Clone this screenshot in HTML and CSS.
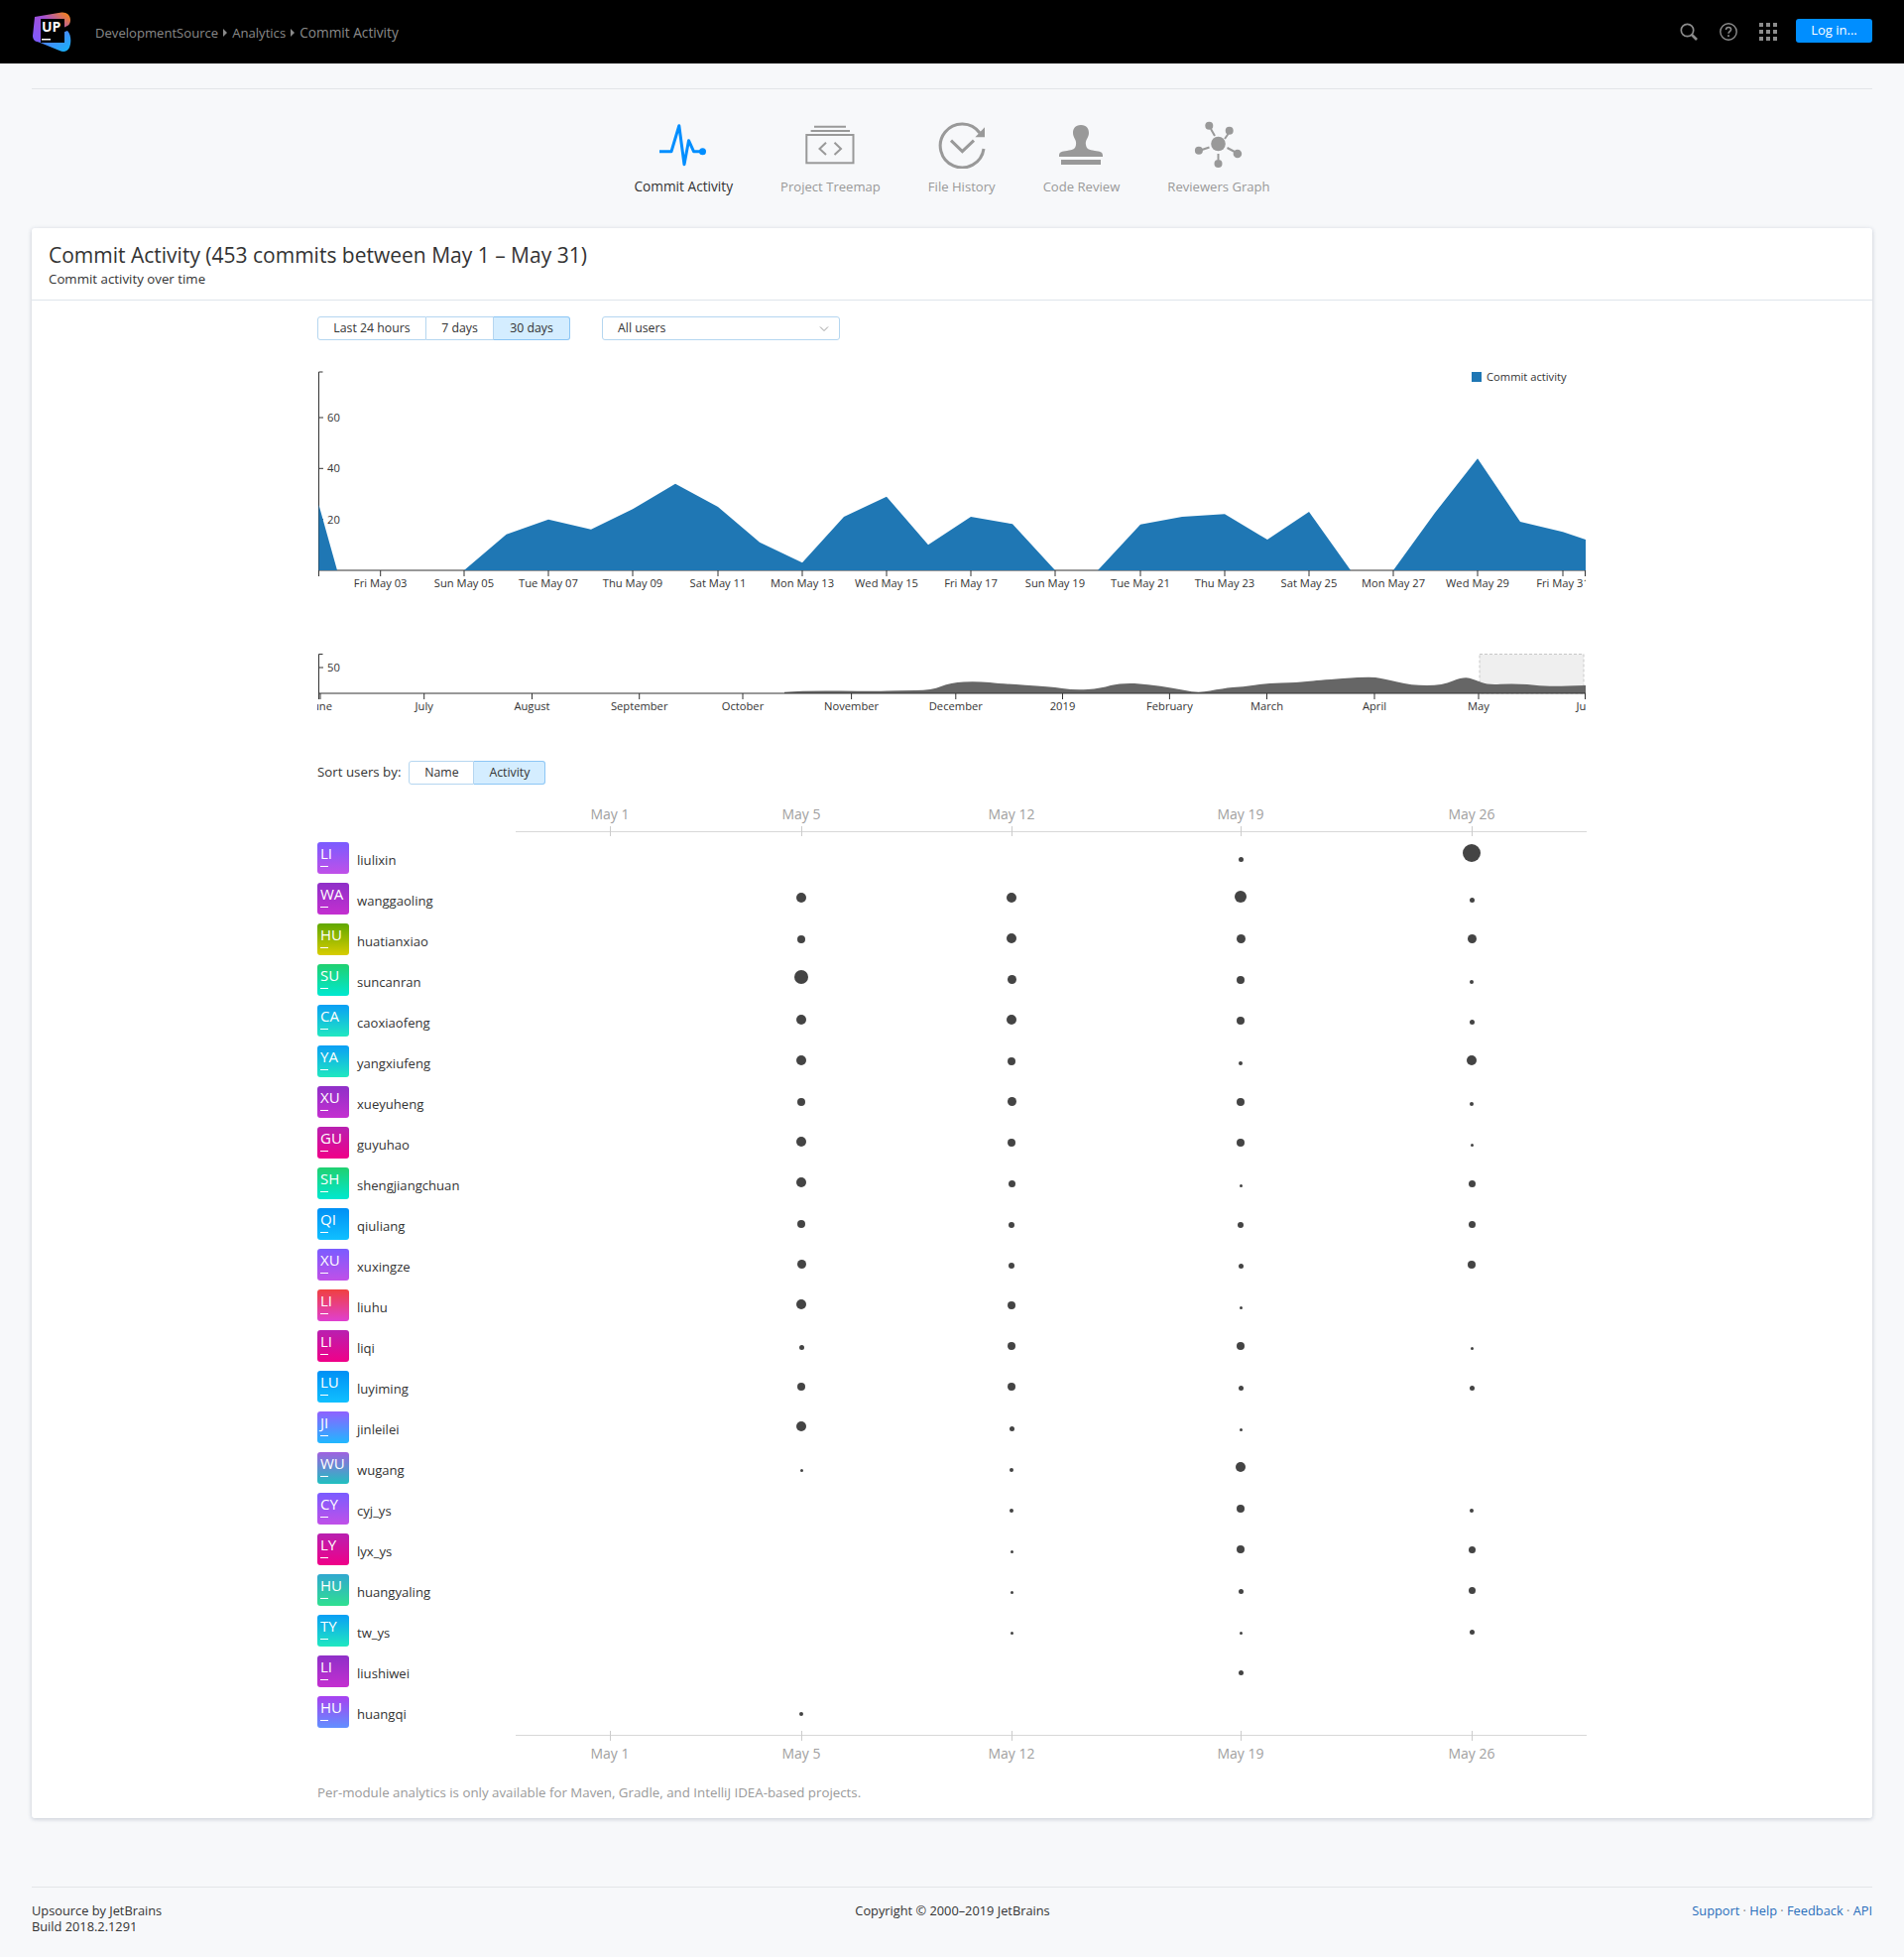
FILE: index.html
```html
<!DOCTYPE html>
<html lang="en">

<head>
    <meta charset="UTF-8">
    <meta name="viewport" content="width=device-width, initial-scale=1.0">
    <title>Commit Activity</title>
    <link rel="stylesheet" href="styles.css">
</head>

<body>
    <header class="topbar">
        <svg class="logo" width="40" height="40" viewBox="0 0 40 40">
            <defs>
                <linearGradient id="logo-top" x1="0" y1="1" x2="1" y2="0">
                    <stop offset="0" stop-color="#7b5cff" />
                    <stop offset="0.55" stop-color="#a24fd8" />
                    <stop offset="1" stop-color="#ff8a00" />
                </linearGradient>
                <linearGradient id="logo-bottom" x1="0" y1="0" x2="1" y2="1">
                    <stop offset="0" stop-color="#6d6cff" />
                    <stop offset="1" stop-color="#12b5f5" />
                </linearGradient>
            </defs>
            <path d="M36 19C40 23 40 31 38 36C36 40 32 41 28 39L6 30Z" fill="url(#logo-bottom)" />
            <path d="M3 5L30 .5C35 0 39 3 39 8C39 12 37 14 34 15L8 30C4 31 1 28 1 24Z" fill="url(#logo-top)" />
            <rect x="9" y="7" width="24" height="24" fill="#000" />
            <text class="logo-text" x="10" y="20">UP</text>
            <rect x="10" y="27" width="9" height="1.500" fill="#fff" />
        </svg>
        <nav class="crumbs">
            <a>DevelopmentSource</a><span class="crumb-arrow"></span><a>Analytics</a><span class="crumb-arrow"></span><a class="crumb-current">Commit Activity</a>
        </nav>
        <div class="top-actions">
            <svg width="18" height="18" viewBox="0 0 18 18" fill="none" stroke="#8c8c8c">
                <circle cx="7.5" cy="7.5" r="6.2" stroke-width="1.7" />
                <path d="M12 12l5 5" stroke-width="2.6" />
            </svg>
            <svg width="18" height="18" viewBox="0 0 18 18" fill="none" stroke="#8c8c8c">
                <circle cx="9" cy="9" r="8.2" stroke-width="1.4" />
                <path d="M6.5 7c0-1.6 1.1-2.5 2.6-2.5S11.6 5.400 11.600 6.800C11.600 8.500 9 8.800 9 10.800" stroke-width="1.5" />
                <path d="M9 12.300v1.800" stroke-width="1.7" />
            </svg>
            <svg width="18" height="18" viewBox="0 0 18 18" fill="#8c8c8c">
                <rect width="4" height="4" />
                <rect x="7" width="4" height="4" />
                <rect x="14" width="4" height="4" />
                <rect y="7" width="4" height="4" />
                <rect x="7" y="7" width="4" height="4" />
                <rect x="14" y="7" width="4" height="4" />
                <rect y="14" width="4" height="4" />
                <rect x="7" y="14" width="4" height="4" />
                <rect x="14" y="14" width="4" height="4" />
            </svg>
            <a class="login">Log in...</a>
        </div>
    </header>

    <div class="page">
        <div class="tabs">
            <a class="tab active">
                <svg width="50" height="48" viewBox="0 0 50 48" fill="none" stroke="#008eff" stroke-width="3">
                    <path d="M1 30.700H13L20.800 4.700L26 43.700L30.500 19.700L35.500 30.700H44.500" stroke-linejoin="round" />
                    <circle cx="44.500" cy="30.700" r="3.500" fill="#008eff" stroke="none" />
                </svg>
                Commit Activity
            </a>
            <a class="tab">
                <svg width="50" height="48" viewBox="0 0 50 48" fill="none" stroke="#999" stroke-width="2">
                    <path d="M9 5.700H41M5.600 10H45" />
                    <rect x="1.300" y="14" width="47.200" height="28.300" />
                    <path d="M21 21.700L14.500 28L21 34M29.500 21.700L36 28L29.500 34" />
                </svg>
                Project Treemap
            </a>
            <a class="tab">
                <svg width="50" height="48" viewBox="0 0 50 48" fill="none" stroke="#999" stroke-width="3">
                    <path d="M47 28A22 22 0 1 1 43 12" />
                    <path d="M48 6.300V16.300H38.400Z" fill="#999" stroke="none" />
                    <path d="M14 19.700L25.400 30.700L37 19.700" />
                </svg>
                File History
            </a>
            <a class="tab">
                <svg width="50" height="48" viewBox="0 0 50 48" fill="#999">
                    <path d="M25 4C31 4 33 8 33 12C33 17 29 19 30 24C30.500 28 33 29 39 30C44 30.500 47 31 47 35V36H3V35C3 31 6 30.500 11 30C17 29 19.500 28 20 24C21 19 17 17 17 12C17 8 19 4 25 4Z" />
                    <rect x="5" y="39" width="40" height="5" />
                </svg>
                Code Review
            </a>
            <a class="tab">
                <svg width="50" height="48" viewBox="0 0 50 48" fill="#999" stroke="none">
                    <circle cx="24.500" cy="23" r="7.300" />
                    <circle cx="15.300" cy="4.700" r="4" />
                    <circle cx="35.700" cy="9.700" r="4" />
                    <circle cx="4.900" cy="29.700" r="4" />
                    <circle cx="43.900" cy="33" r="4.300" />
                    <circle cx="24.500" cy="43" r="4" />
                    <path d="M17 8L21 15M34.500 13L31 18M8 29L15.500 26.500M41 31L33.500 27M24.500 39V33" stroke="#999" stroke-width="2" />
                </svg>
                Reviewers Graph
            </a>
        </div>

        <section class="card">
            <div class="card-head">
                <h1>Commit Activity (453 commits between May 1 – May 31)</h1>
                <p>Commit activity over time</p>
            </div>

            <div class="card-body">
                <div class="controls">
                    <div class="btn-group">
                        <a class="btn w-day">Last 24 hours</a><a class="btn w-week">7 days</a><a class="btn w-month on">30 days</a>
                    </div>
                    <div class="select">
                        All users
                        <svg width="10" height="6" viewBox="0 0 10 6" fill="none" stroke="#999">
                            <path d="M1 .5L5 4.500L9 .5" />
                        </svg>
                    </div>
                </div>

                <svg class="chart" width="1279" height="240" viewBox="0 0 1279 240">
                    <path class="axis-line" d="M5.500 10H1.500V210H1279" />
                    <path class="axis-line" d="M1.500 56H6M1.500 107.300H6M1.500 158.700H6" />
                    <text x="10" y="60">60</text>
                    <text x="10" y="111">40</text>
                    <text x="10" y="163">20</text>
                    <path fill="#1f77b4" d="M1.500 144L20 210H148L190.600 173.700L233 158.700L276 168.700L318 148.300L361 122.700L404 146L446 181.700L489 202.300L531 156L574 135.700L616 184.300L659 156L701 163.300L744 210H787L830 163.700L872 156L915 153.300L958 179L1000 151L1042 210H1085L1127 152L1170 97.300L1213 161L1256 171.300L1279 179V210H1.500Z" />
                    <path class="axis-line" d="M1.500 210V216M63.700 210V216M148 210V216M233 210V216M318 210V216M404 210V216M489 210V216M574 210V216M659 210V216M744 210V216M830 210V216M915 210V216M1000 210V216M1085 210V216M1170 210V216M1256 210V216M1278.500 210V216" />
                    <g text-anchor="middle">
                        <text x="63.700" y="227">Fri May 03</text>
                        <text x="148" y="227">Sun May 05</text>
                        <text x="233" y="227">Tue May 07</text>
                        <text x="318" y="227">Thu May 09</text>
                        <text x="404" y="227">Sat May 11</text>
                        <text x="489" y="227">Mon May 13</text>
                        <text x="574" y="227">Wed May 15</text>
                        <text x="659" y="227">Fri May 17</text>
                        <text x="744" y="227">Sun May 19</text>
                        <text x="830" y="227">Tue May 21</text>
                        <text x="915" y="227">Thu May 23</text>
                        <text x="1000" y="227">Sat May 25</text>
                        <text x="1085" y="227">Mon May 27</text>
                        <text x="1170" y="227">Wed May 29</text>
                        <text x="1256" y="227">Fri May 31</text>
                    </g>
                    <rect x="1164" y="10" width="10" height="10" fill="#1f77b4" />
                    <text x="1179" y="19">Commit activity</text>
                </svg>

                <svg class="chart mini" width="1279" height="75" viewBox="0 0 1279 75">
                    <rect class="brush" x="1172" y="9.500" width="105" height="39.500" />
                    <path fill="#666" d="M471 49L471 47.700Q492 46 528 46.500Q565 47 575 46.500Q586 46 603 46Q620 46 629 42Q638.500 38 652 37.500Q665 37 678 38Q691 39.500 714 40.700Q738 42 751 44Q764 46 777 45Q790 44 800 41Q810 38.500 824 39Q838 40 850 41.700Q862 43.500 875 46Q887.500 49 900 46.500Q913 44 923 43Q933 42.500 945 40.700Q957 39 972 38.500Q988 38 998 37Q1008 36 1034 34Q1059.500 32 1067 33Q1075 34 1089 37.500Q1103 41 1119 41Q1134.500 41 1145 36.500Q1156 32 1162 33.700Q1168 35.500 1174 38Q1180 40.500 1193 39.700Q1206 39 1220 40Q1233 41.500 1243 41.700Q1253 42 1279 41L1279 49Z" />
                    <path class="axis-line" d="M5.500 9.500H1.500V49H1279M1.500 23H6" />
                    <path class="axis-line" d="M1.500 49V55M3 49V55M107.700 49V55M216.500 49V55M324.700 49V55M429 49V55M538.600 49V55M643.800 49V55M751.500 49V55M859.400 49V55M957.500 49V55M1066 49V55M1171 49V55M1278.500 49V55" />
                    <text x="10" y="27">50</text>
                    <g text-anchor="middle">
                        <text x="3.500" y="66">June</text>
                        <text x="107.700" y="66">July</text>
                        <text x="216.500" y="66">August</text>
                        <text x="324.700" y="66">September</text>
                        <text x="429" y="66">October</text>
                        <text x="538.600" y="66">November</text>
                        <text x="643.800" y="66">December</text>
                        <text x="751.500" y="66">2019</text>
                        <text x="859.400" y="66">February</text>
                        <text x="957.500" y="66">March</text>
                        <text x="1066" y="66">April</text>
                        <text x="1171" y="66">May</text>
                        <text x="1281" y="66">June</text>
                    </g>
                </svg>

                <div class="sort-row">
                    <span>Sort users by:</span>
                    <div class="btn-group">
                        <a class="btn w-name">Name</a><a class="btn w-activity on">Activity</a>
                    </div>
                </div>

                <div class="week-axis top">
                    <span>May 1</span><span>May 5</span><span>May 12</span><span>May 19</span><span>May 26</span>
                </div>

                <div class="users">
                    <div class="user-row"><div class="user"><span class="avatar g-violet">LI</span>liulixin</div><i></i><i></i><i></i><i><b class="d5"></b></i><i><b class="d18"></b></i></div>
                    <div class="user-row"><div class="user"><span class="avatar g-purple">WA</span>wanggaoling</div><i></i><i><b class="d10"></b></i><i><b class="d10"></b></i><i><b class="d12"></b></i><i><b class="d5"></b></i></div>
                    <div class="user-row"><div class="user"><span class="avatar g-olive">HU</span>huatianxiao</div><i></i><i><b class="d8"></b></i><i><b class="d10"></b></i><i><b class="d9"></b></i><i><b class="d9"></b></i></div>
                    <div class="user-row"><div class="user"><span class="avatar g-green">SU</span>suncanran</div><i></i><i><b class="d14"></b></i><i><b class="d9"></b></i><i><b class="d8"></b></i><i><b class="d4"></b></i></div>
                    <div class="user-row"><div class="user"><span class="avatar g-teal">CA</span>caoxiaofeng</div><i></i><i><b class="d10"></b></i><i><b class="d10"></b></i><i><b class="d8"></b></i><i><b class="d5"></b></i></div>
                    <div class="user-row"><div class="user"><span class="avatar g-teal">YA</span>yangxiufeng</div><i></i><i><b class="d10"></b></i><i><b class="d8"></b></i><i><b class="d4"></b></i><i><b class="d10"></b></i></div>
                    <div class="user-row"><div class="user"><span class="avatar g-purple">XU</span>xueyuheng</div><i></i><i><b class="d8"></b></i><i><b class="d9"></b></i><i><b class="d8"></b></i><i><b class="d4"></b></i></div>
                    <div class="user-row"><div class="user"><span class="avatar g-pink">GU</span>guyuhao</div><i></i><i><b class="d10"></b></i><i><b class="d8"></b></i><i><b class="d8"></b></i><i><b class="d3"></b></i></div>
                    <div class="user-row"><div class="user"><span class="avatar g-green">SH</span>shengjiangchuan</div><i></i><i><b class="d10"></b></i><i><b class="d7"></b></i><i><b class="d3"></b></i><i><b class="d7"></b></i></div>
                    <div class="user-row"><div class="user"><span class="avatar g-sky">QI</span>qiuliang</div><i></i><i><b class="d8"></b></i><i><b class="d6"></b></i><i><b class="d6"></b></i><i><b class="d7"></b></i></div>
                    <div class="user-row"><div class="user"><span class="avatar g-violet">XU</span>xuxingze</div><i></i><i><b class="d9"></b></i><i><b class="d6"></b></i><i><b class="d5"></b></i><i><b class="d8"></b></i></div>
                    <div class="user-row"><div class="user"><span class="avatar g-red">LI</span>liuhu</div><i></i><i><b class="d10"></b></i><i><b class="d8"></b></i><i><b class="d3"></b></i><i></i></div>
                    <div class="user-row"><div class="user"><span class="avatar g-pink">LI</span>liqi</div><i></i><i><b class="d5"></b></i><i><b class="d8"></b></i><i><b class="d8"></b></i><i><b class="d3"></b></i></div>
                    <div class="user-row"><div class="user"><span class="avatar g-sky">LU</span>luyiming</div><i></i><i><b class="d8"></b></i><i><b class="d8"></b></i><i><b class="d5"></b></i><i><b class="d5"></b></i></div>
                    <div class="user-row"><div class="user"><span class="avatar g-periwinkle">JI</span>jinleilei</div><i></i><i><b class="d10"></b></i><i><b class="d5"></b></i><i><b class="d3"></b></i><i></i></div>
                    <div class="user-row"><div class="user"><span class="avatar g-slate">WU</span>wugang</div><i></i><i><b class="d3"></b></i><i><b class="d4"></b></i><i><b class="d10"></b></i><i></i></div>
                    <div class="user-row"><div class="user"><span class="avatar g-violet">CY</span>cyj_ys</div><i></i><i></i><i><b class="d4"></b></i><i><b class="d8"></b></i><i><b class="d4"></b></i></div>
                    <div class="user-row"><div class="user"><span class="avatar g-pink">LY</span>lyx_ys</div><i></i><i></i><i><b class="d3"></b></i><i><b class="d8"></b></i><i><b class="d7"></b></i></div>
                    <div class="user-row"><div class="user"><span class="avatar g-sea">HU</span>huangyaling</div><i></i><i></i><i><b class="d3"></b></i><i><b class="d5"></b></i><i><b class="d7"></b></i></div>
                    <div class="user-row"><div class="user"><span class="avatar g-teal">TY</span>tw_ys</div><i></i><i></i><i><b class="d3"></b></i><i><b class="d3"></b></i><i><b class="d5"></b></i></div>
                    <div class="user-row"><div class="user"><span class="avatar g-purple">LI</span>liushiwei</div><i></i><i></i><i></i><i><b class="d5"></b></i><i></i></div>
                    <div class="user-row"><div class="user"><span class="avatar g-lilac">HU</span>huangqi</div><i></i><i><b class="d4"></b></i><i></i><i></i><i></i></div>
                </div>

                <div class="week-axis bottom">
                    <span>May 1</span><span>May 5</span><span>May 12</span><span>May 19</span><span>May 26</span>
                </div>

                <p class="note">Per-module analytics is only available for Maven, Gradle, and IntelliJ IDEA-based projects.</p>
            </div>
        </section>

        <footer class="footer">
            <div>Upsource by JetBrains<br>Build 2018.2.1291</div>
            <div class="copyright">Copyright © 2000–2019 JetBrains</div>
            <div class="links"><a>Support</a> · <a>Help</a> · <a>Feedback</a> · <a>API</a></div>
        </footer>
    </div>
</body>

</html>
```

FILE: styles.css
```css
* {
    margin: 0;
    padding: 0;
    box-sizing: border-box;
}

body {
    background-color: #f7f8fa;
    color: #333;
    font-family: "Open Sans", "Noto Sans", sans-serif;
    font-size: 13.300px;
    line-height: 18px;
}

.topbar {
    height: 64px;
    background-color: #000;
    display: flex;
    align-items: center;
    padding: 0 32px;
}

.logo {
    flex: none;
    margin-right: 24px;
}

.logo-text {
    fill: #fff;
    font-size: 14px;
    font-weight: 700;
}

.crumbs {
    display: flex;
    align-items: center;
    color: #8a8a8a;
    font-size: 13.100px;
    margin-top: 2px;
}

.crumb-current {
    font-size: 13.700px;
}

.crumb-arrow {
    width: 0;
    height: 0;
    margin: 0 5px;
    border-left: 4px solid #8a8a8a;
    border-top: 4px solid transparent;
    border-bottom: 4px solid transparent;
}

.top-actions {
    margin-left: auto;
    display: flex;
    align-items: center;
    gap: 22px;
}

.login {
    width: 77px;
    height: 24px;
    margin-left: -3px;
    margin-top: -3px;
    background-color: #008eff;
    border-radius: 3px;
    color: #fff;
    font-size: 13px;
    line-height: 23px;
    text-align: center;
}

.page {
    padding: 25px 32px 23px;
}

.tabs {
    border-top: 1px solid #e3e5e8;
    padding-top: 32px;
    display: flex;
    justify-content: center;
    gap: 48px;
}

.tab {
    display: flex;
    flex-direction: column;
    align-items: center;
    gap: 9px;
    color: #999;
    font-size: 13.100px;
}

.tab.active {
    color: #333;
    font-size: 13.700px;
}

.card {
    margin-top: 33px;
    background-color: #fff;
    border-radius: 3px;
    box-shadow: 0 1px 4px rgba(60, 80, 110, 0.28);
}

.card-head {
    padding: 13px 17px 12px;
    border-bottom: 1px solid #dfe5eb;
}

.card-head h1 {
    font-size: 21px;
    font-weight: 400;
    line-height: 28px;
    margin-bottom: 1px;
}

.card-body {
    padding: 16px 288px 17px;
}

.controls {
    display: flex;
    gap: 32px;
}

.btn-group {
    display: flex;
    font-size: 12.300px;
}

.btn {
    height: 24px;
    border: 1px solid #b5d6f0;
    border-left: none;
    line-height: 21px;
    text-align: center;
}

.btn:first-child {
    border-left: 1px solid #b5d6f0;
    border-radius: 3px 0 0 3px;
}

.btn:last-child {
    border-radius: 0 3px 3px 0;
}

.btn.on {
    background-color: #d4edff;
    border-color: #8cc6f5;
}

.w-day {
    width: 110px;
}

.w-week {
    width: 68px;
}

.w-month {
    width: 77px;
}

.w-name {
    width: 66px;
}

.w-activity {
    width: 72px;
}

.select {
    width: 240px;
    height: 24px;
    border: 1px solid #b5d6f0;
    border-radius: 3px;
    padding: 0 10px 1px 15px;
    display: flex;
    justify-content: space-between;
    align-items: center;
    font-size: 12.300px;
}

.select svg {
    margin-top: 2px;
}

.chart {
    display: block;
    margin-top: 22px;
    font-size: 11.200px;
    fill: #333;
}

.chart.mini {
    margin-top: 45px;
}

.axis-line {
    fill: none;
    stroke: #333;
    stroke-width: 1;
}

.brush {
    fill: #efefef;
    stroke: #c8c8c8;
    stroke-dasharray: 3 2;
}

.sort-row {
    margin-top: 42px;
    display: flex;
    align-items: center;
    gap: 8px;
}

.sort-row > span {
    padding-bottom: 2px;
}

.week-axis,
.user-row {
    display: grid;
    grid-template-columns: 200px 190px 196px 228px 234px 232px;
}

.week-axis {
    color: #a0a0a0;
    font-size: 14px;
    line-height: 20px;
    text-align: center;
}

.week-axis span {
    position: relative;
}

.week-axis span:first-child {
    grid-column-start: 2;
}

.week-axis span::after {
    content: "";
    position: absolute;
    left: 50%;
    width: 1px;
    height: 10px;
    background-color: #ccc;
}

.week-axis.top {
    margin-top: 21px;
    margin-bottom: 10px;
    height: 27px;
    line-height: 18px;
}

.week-axis.top span {
    border-bottom: 1px solid #d8d8d8;
}

.week-axis.top span::after {
    bottom: -5px;
}

.week-axis.bottom {
    margin-top: 7px;
}

.week-axis.bottom span {
    border-top: 1px solid #d8d8d8;
    padding-top: 8px;
}

.week-axis.bottom span::after {
    top: -5px;
}

.users {
    display: flex;
    flex-direction: column;
    gap: 9px;
}

.user-row {
    height: 32px;
}

.user {
    display: flex;
    gap: 8px;
    font-size: 13.100px;
    line-height: 36px;
}

.user-row i {
    height: 20px;
    display: flex;
    align-items: flex-end;
    justify-content: center;
}

.user-row b {
    display: block;
    border-radius: 50%;
    background-color: #444;
}

.d3 { width: 3px; height: 3px; }
.d4 { width: 4px; height: 4px; }
.d5 { width: 5px; height: 5px; }
.d6 { width: 6px; height: 6px; }
.d7 { width: 7px; height: 7px; }
.d8 { width: 8px; height: 8px; }
.d9 { width: 9px; height: 9px; }
.d10 { width: 10px; height: 10px; }
.d12 { width: 12px; height: 12px; }
.d14 { width: 14px; height: 14px; }
.d18 { width: 18px; height: 18px; }

.avatar {
    position: relative;
    width: 32px;
    height: 32px;
    flex: none;
    border-radius: 3px;
    padding-left: 3px;
    color: #fff;
    font-size: 15px;
    line-height: 22px;
}

.avatar::after {
    content: "";
    position: absolute;
    left: 3px;
    bottom: 7px;
    width: 8px;
    height: 1px;
    background-color: #fff;
}

.g-violet { background: linear-gradient(#7a5cff, #c050e8); }
.g-purple { background: linear-gradient(#8f30c8, #c42fd0); }
.g-olive { background: linear-gradient(#60a800, #d8cc00); }
.g-green { background: linear-gradient(#20d070, #00e8d0); }
.g-teal { background: linear-gradient(#0a9ff5, #20e8c0); }
.g-pink { background: linear-gradient(#b820b0, #f00088); }
.g-sky { background: linear-gradient(#0090f5, #10c0ff); }
.g-red { background: linear-gradient(#f04040, #e040d0); }
.g-periwinkle { background: linear-gradient(#9060ff, #20b8ff); }
.g-slate { background: linear-gradient(#a060e0, #20c0c0); }
.g-sea { background: linear-gradient(#30a8d0, #30e090); }
.g-lilac { background: linear-gradient(#a840f0, #6090ff); }

.note {
    margin-top: 20px;
    color: #9a9a9a;
}

.footer {
    margin-top: 69px;
    border-top: 1px solid #e3e5e8;
    padding-top: 15px;
    display: grid;
    grid-template-columns: 1fr auto 1fr;
    font-size: 12.800px;
    line-height: 16px;
}

.copyright {
    margin-left: 1px;
}

.links {
    text-align: right;
    color: #888;
}

.links a {
    color: #2a6ebb;
}
```
